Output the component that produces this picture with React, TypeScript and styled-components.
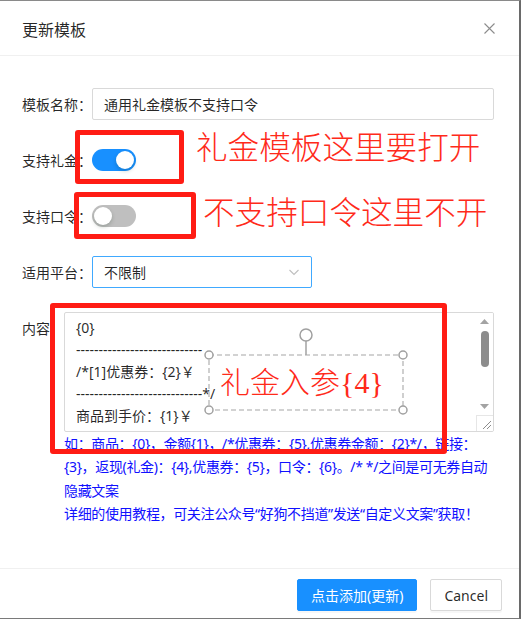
import React from "react";
import styled, { createGlobalStyle } from "styled-components";

const Global = createGlobalStyle`
  html, body { margin: 0; padding: 0; background: #fff; }
  * { box-sizing: border-box; }
  body { font-family: "Noto Sans", "Noto Sans CJK SC", sans-serif; }
`;

const UI = `"Noto Sans", "Noto Sans CJK SC", sans-serif`;

const Frame = styled.div`
  position: relative;
  width: 521px;
  height: 619px;
  border-top: 1px solid #8a8a8a;
  border-right: 2px solid #6a6a6a;
  border-bottom: 1px solid #7a7a7a;
  background: #fff;
  display: flex;
  flex-direction: column;
  font-family: ${UI};
  color: rgba(0, 0, 0, 0.85);
  font-size: 14px;
`;

const Header = styled.div`
  height: 55px;
  flex: none;
  display: flex;
  align-items: center;
  justify-content: space-between;
  padding: 0 22px 0 22px;
  border-bottom: 1px solid #f0f0f0;
`;

const Title = styled.div`
  font-size: 16px;
  line-height: 22px;
  color: rgba(0, 0, 0, 0.85);
  font-family: "Noto Sans CJK SC", sans-serif;
  margin-top: 1px;
`;

const Close = styled.div`
  width: 12px;
  height: 12px;
  display: flex;
  align-items: center;
  justify-content: center;
  margin-right: 2px;
  margin-top: 1px;
`;

const Body = styled.div`
  flex: 1;
  padding: 32px 25px 0 22px;
  display: flex;
  flex-direction: column;
  gap: 24px;
`;

const Row = styled.div<{ $top?: boolean }>`
  display: flex;
  align-items: ${(p) => (p.$top ? "flex-start" : "center")};
  min-height: 32px;
`;

const Label = styled.div`
  flex: none;
  line-height: 32px;
  white-space: nowrap;
  font-family: "Noto Sans CJK SC", sans-serif;
  color: rgba(0, 0, 0, 0.85);
`;

const Input = styled.div`
  flex: 1;
  height: 32px;
  border: 1px solid #d9d9d9;
  border-radius: 2px;
  padding: 0 11px;
  display: flex;
  align-items: center;
  font-family: "Noto Sans CJK SC", sans-serif;
  color: rgba(0, 0, 0, 0.85);
`;

const Select = styled(Input)`
  flex: none;
  width: 220px;
  border-color: #40a9ff;
  justify-content: space-between;
`;

const Switch = styled.div<{ $on?: boolean }>`
  width: 44px;
  height: 22px;
  border-radius: 11px;
  background: ${(p) => (p.$on ? "#1890ff" : "#bfbfbf")};
  display: flex;
  align-items: center;
  justify-content: ${(p) => (p.$on ? "flex-end" : "flex-start")};
  padding: 2px;
`;

const Knob = styled.div`
  width: 18px;
  height: 18px;
  border-radius: 50%;
  background: #fff;
  box-shadow: 0 2px 4px rgba(0, 35, 11, 0.2);
`;

const ContentCol = styled.div`
  flex: 1;
  min-width: 0;
  display: flex;
  flex-direction: column;
`;

const TextArea = styled.div`
  height: 120px;
  border: 1px solid #d9d9d9;
  border-radius: 2px;
  display: flex;
  overflow: hidden;
`;

const TextBody = styled.div`
  flex: 1;
  padding: 4px 11px;
  line-height: 22px;
  font-family: "Noto Sans", "Noto Sans CJK SC", sans-serif;
  color: rgba(0, 0, 0, 0.85);
  white-space: pre;
`;

const ScrollBar = styled.div`
  width: 17px;
  flex: none;
  display: flex;
  flex-direction: column;
  background: #fff;
`;

const ScrollArrow = styled.div`
  height: 17px;
  display: flex;
  align-items: center;
  justify-content: center;
`;

const ScrollTrack = styled.div`
  flex: 1;
  display: flex;
  justify-content: center;
  padding-top: 1px;
`;

const Thumb = styled.div`
  width: 8px;
  height: 36px;
  border-radius: 4px;
  background: #8c8c8c;
`;

const Grip = styled.div`
  height: 16px;
  border-top: 1px solid #e6e6e6;
  border-left: 1px solid #e6e6e6;
  display: flex;
  align-items: flex-end;
  justify-content: flex-end;
`;

const Help = styled.div`
  color: #1010ff;
  line-height: 23.3px;
  letter-spacing: -0.35px;
  font-family: "Noto Sans", "Noto Sans CJK SC", sans-serif;
  white-space: nowrap;
`;

const Footer = styled.div`
  flex: none;
  height: 50px;
  border-top: 1px solid #f0f0f0;
  display: flex;
  justify-content: flex-end;
  align-items: flex-start;
  padding: 10px 17px 0 0;
  gap: 13px;
`;

const Button = styled.div<{ $primary?: boolean }>`
  height: 32px;
  padding: 0 13px;
  border-radius: 2px;
  display: flex;
  align-items: center;
  font-family: "Noto Sans", "Noto Sans CJK SC", sans-serif;
  border: 1px solid ${(p) => (p.$primary ? "#1890ff" : "#d9d9d9")};
  background: ${(p) => (p.$primary ? "#1890ff" : "#fff")};
  color: ${(p) => (p.$primary ? "#fff" : "rgba(0,0,0,0.85)")};
  box-shadow: 0 2px 0 rgba(0, 0, 0, 0.03);
`;

/* annotation overlays */
const RedBox = styled.div`
  position: absolute;
  border: 5px solid #ff1c14;
  border-radius: 3px;
`;

const RedNote = styled.div`
  position: absolute;
  color: #ff2a1a;
  font-size: 31.6px;
  line-height: 34px;
  white-space: nowrap;
  font-family: "Liberation Serif", "Noto Sans CJK SC", serif;
  font-weight: 300;
`;

const Shape = styled.div`
  position: absolute;
  left: 209px;
  top: 354px;
  width: 194px;
  height: 55px;
  display: flex;
  align-items: center;
  padding-left: 11px;
`;

const ShapeSvg = styled.svg`
  position: absolute;
  left: 0;
  top: 0;
  overflow: visible;
`;

const ShapeText = styled.span`
  position: relative;
  color: #ff2a1a;
  font-size: 30px;
  line-height: 34px;
  white-space: nowrap;
  font-family: "Liberation Serif", "Noto Sans CJK SC", serif;
  font-weight: 300;
`;

const dashes = "----------------------------";

export default function App() {
  return (
    <>
      <Global />
      <Frame>
        <Header>
          <Title>更新模板</Title>
          <Close>
            <svg width="11" height="11" viewBox="0 0 11 11">
              <path d="M0.5 0.5 L10.5 10.5 M10.5 0.5 L0.5 10.5" stroke="#8c8c8c" strokeWidth="1.1" />
            </svg>
          </Close>
        </Header>
        <Body>
          <Row>
            <Label>模板名称：</Label>
            <Input>通用礼金模板不支持口令</Input>
          </Row>
          <Row>
            <Label>支持礼金：</Label>
            <Switch $on>
              <Knob />
            </Switch>
          </Row>
          <Row>
            <Label>支持口令：</Label>
            <Switch>
              <Knob />
            </Switch>
          </Row>
          <Row>
            <Label>适用平台：</Label>
            <Select>
              <span>不限制</span>
              <svg width="12" height="12" viewBox="0 0 12 12">
                <path d="M1.5 4 L6 8.5 L10.5 4" fill="none" stroke="#bfbfbf" strokeWidth="1.1" />
              </svg>
            </Select>
          </Row>
          <Row $top>
            <Label>内容：</Label>
            <ContentCol>
              <TextArea>
                <TextBody>
                  {"{0}\n" + dashes + "\n/*[1]优惠券：{2}￥\n" + dashes + "*/\n商品到手价：{1}￥"}
                </TextBody>
                <ScrollBar>
                  <ScrollArrow>
                    <svg width="9" height="5" viewBox="0 0 9 5">
                      <path d="M0 5 L4.5 0 L9 5 Z" fill="#a3a3a3" />
                    </svg>
                  </ScrollArrow>
                  <ScrollTrack>
                    <Thumb />
                  </ScrollTrack>
                  <ScrollArrow>
                    <svg width="9" height="5" viewBox="0 0 9 5">
                      <path d="M0 0 L9 0 L4.5 5 Z" fill="#a3a3a3" />
                    </svg>
                  </ScrollArrow>
                  <Grip>
                    <svg width="14" height="14" viewBox="0 0 14 14">
                      <path d="M12 4 L4 12 M12 8 L8 12" stroke="#8c8c8c" strokeWidth="1" />
                    </svg>
                  </Grip>
                </ScrollBar>
              </TextArea>
              <Help>如：商品：{"{0}"}，金额{"{1}"}，/*优惠券：{"{5}"},优惠券金额：{"{2}"}*/，链接：</Help>
              <Help>{"{3}"}，返现(礼金)：{"{4}"},优惠券：{"{5}"}，口令：{"{6}"}。/* */之间是可无券自动</Help>
              <Help>隐藏文案</Help>
              <Help>详细的使用教程，可关注公众号“好狗不挡道”发送“自定义文案”获取！</Help>
            </ContentCol>
          </Row>
        </Body>
        <Footer>
          <Button $primary>点击添加(更新)</Button>
          <Button>Cancel</Button>
        </Footer>

        <RedBox style={{ left: 75, top: 129, width: 109, height: 54 }} />
        <RedBox style={{ left: 74, top: 191, width: 122, height: 47 }} />
        <RedBox style={{ left: 50, top: 302, width: 397, height: 151 }} />
        <RedNote style={{ left: 196, top: 131 }}>礼金模板这里要打开</RedNote>
        <RedNote style={{ left: 203, top: 196 }}>不支持口令这里不开</RedNote>
        <Shape>
          <ShapeSvg width="194" height="55" viewBox="0 0 194 55">
            <rect x="0" y="0" width="194" height="55" fill="none" stroke="#c4c4c4" strokeWidth="1.6" strokeDasharray="5 3" />
            <line x1="97" y1="-14" x2="97" y2="0" stroke="#a8a8a8" strokeWidth="1.6" />
            <circle cx="97" cy="-20" r="6" fill="#fff" stroke="#a0a0a0" strokeWidth="1.5" />
            <circle cx="0" cy="0" r="4" fill="#fff" stroke="#a0a0a0" strokeWidth="1.5" />
            <circle cx="194" cy="0" r="4" fill="#fff" stroke="#a0a0a0" strokeWidth="1.5" />
            <circle cx="0" cy="55" r="4" fill="#fff" stroke="#a0a0a0" strokeWidth="1.5" />
            <circle cx="194" cy="55" r="4" fill="#fff" stroke="#a0a0a0" strokeWidth="1.5" />
          </ShapeSvg>
          <ShapeText>礼金入参{"{4}"}</ShapeText>
        </Shape>
      </Frame>
    </>
  );
}
